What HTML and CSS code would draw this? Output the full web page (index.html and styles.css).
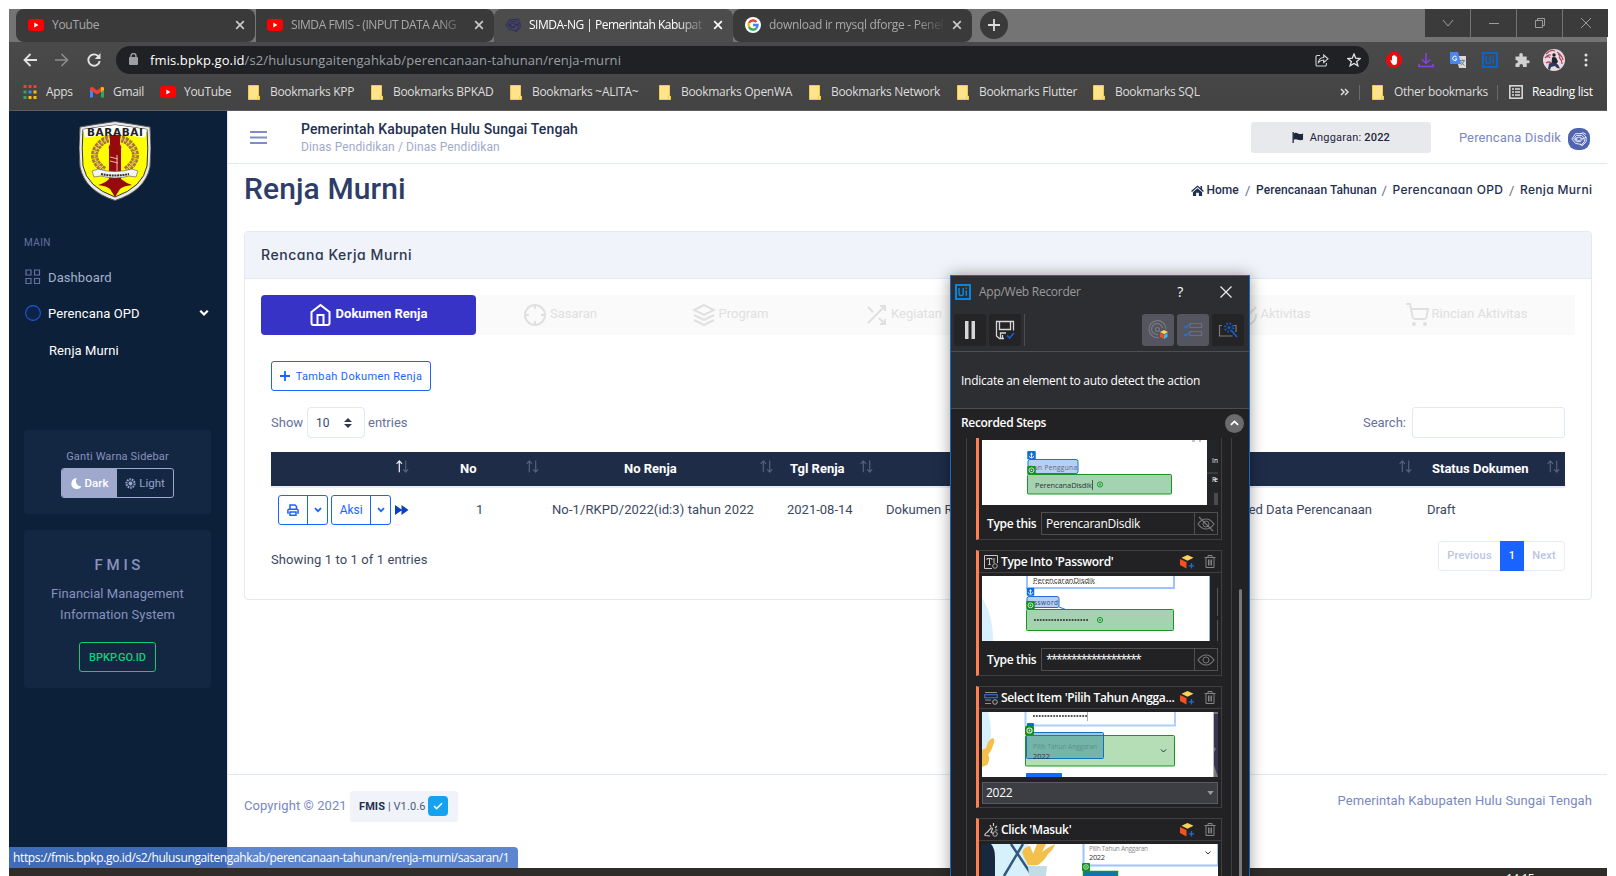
FILE: index.html
```html
<!DOCTYPE html>
<html lang="id">
<head>
<meta charset="utf-8">
<title>SIMDA-NG | Pemerintah Kabupaten Hulu Sungai Tengah</title>
<link rel="stylesheet" href="styles.css">
</head>
<body>
<svg class="defs" width="0" height="0">
  <defs>
    <symbol id="yt" viewBox="0 0 16 12"><rect width="16" height="12" rx="3" fill="#f00"/><path d="M6.3 3.4v5.2L10.4 6z" fill="#fff"/></symbol>
    <symbol id="folder" viewBox="0 0 12 15"><path d="M.5.5h10v10l1 1v3H.5z" fill="#ffe48c" stroke="#f5cb45"/><path d="M9.5 14v-3h2v3z" fill="#ffe48c" stroke="#f5cb45" stroke-width=".8"/></symbol>
    <symbol id="x" viewBox="0 0 10 10"><path d="M1.2 1.2l7.6 7.6M8.8 1.2L1.2 8.8" fill="none" stroke="currentColor" stroke-width="1.7"/></symbol>
    <symbol id="knot" viewBox="0 0 18 18"><g fill="none" stroke="currentColor" stroke-width="1.1"><path d="M1 9l4-6h8l4 4M1 9l4 5 6 1M3 9l3-4h6l3 3M3 9l3 3h5M5 9l2-2h4l2 2-2 2H7zM10 3l4-1 3 2M17 7l-4 2h-3M17 7v5l-4 4-3-1M15 9v3l-4 4M12 17l4-4"/><circle cx="6" cy="9" r="1"/></g></symbol>
    <symbol id="sort" viewBox="0 0 13 13"><path d="M3.3 12.3V1M.6 3.8L3.3.9l2.7 2.9" fill="none" stroke="var(--up,#56617a)" stroke-width="1.2"/><path d="M9.7.5v11.3M7.2 9.3l2.5 2.7 2.5-2.7" fill="none" stroke="#56617a" stroke-width="1.2"/></symbol>
    <symbol id="chev" viewBox="0 0 8 6"><path d="M1 1.2l3 3 3-3" fill="none" stroke="currentColor" stroke-width="1.8"/></symbol>
    <symbol id="ui" viewBox="0 0 16 16"><rect x="1" y="1" width="14" height="14" fill="none" stroke="currentColor" stroke-width="2"/><path d="M4 4v5.4q0 2.1 2.1 2.1t2.1-2.1V4M11.3 6.3v5.4M11.3 3.6v1.5" fill="none" stroke="currentColor" stroke-width="1.5"/></symbol>
    <symbol id="cube" viewBox="0 0 14 14"><path d="M1.5 2.7L7.5 0l6 2.7-6 3z" fill="#f9d25c"/><path d="M0 4l6.500 3v6.500L0 10z" fill="#f4511e"/><path d="M11.500 8v5.500M8.800 10.800h5.200" stroke="#1a6fd6" stroke-width="1.300"/></symbol>
    <symbol id="trash" viewBox="0 0 12 13"><path d="M.5 2.500h11M4 2.500v-2h4v2M2 2.500v10h8v-10M4.500 4.500v6M6 4.500v6M7.500 4.500v6" fill="none" stroke="#858585"/></symbol>
    <symbol id="target" viewBox="-4 -4 8 8"><circle r="2.600" fill="none" stroke="#119a22"/><circle r=".9" fill="#119a22"/></symbol>
    <symbol id="tagA" viewBox="0 0 8 8"><rect width="8" height="8" rx="1" fill="#0d6ae0"/><path d="M4 1.500v5M1.800 4.500Q2 6.500 4 6.500t2.200-2M2.700 3h2.600" fill="none" stroke="#fff" stroke-width=".8"/></symbol>
    <symbol id="tagT" viewBox="0 0 8 8"><rect width="8" height="8" rx="1" fill="#0f8f1b"/><circle cx="4" cy="4" r="2.300" fill="none" stroke="#d7f0da" stroke-width=".9"/><circle cx="4" cy="4" r=".8" fill="#d7f0da"/></symbol>
  </defs>
</svg>

<div class="screen">
  <div class="chrome">
    <div class="tabs">
      <div class="tab"><svg class="fav yt"><use href="#yt"/></svg><span class="tt">YouTube</span><svg class="cl"><use href="#x"/></svg></div>
      <div class="tab div"><svg class="fav yt"><use href="#yt"/></svg><span class="tt fade t2">SIMDA FMIS - (INPUT DATA ANG</span><svg class="cl"><use href="#x"/></svg></div>
      <div class="tab on"><svg class="fav knot"><use href="#knot"/></svg><span class="tt fade t3">SIMDA-NG | Pemerintah Kabupat</span><svg class="cl"><use href="#x"/></svg></div>
      <div class="tab"><svg class="fav goog" viewBox="0 0 16 16"><circle cx="8" cy="8" r="8" fill="#fff"/><g fill="none" stroke-width="2.400"><path d="M11.400 5A4.500 4.500 0 0 0 4 6" stroke="#ea4335"/><path d="M4 6a4.600 4.600 0 0 0 0 4" stroke="#fbbc05"/><path d="M4 10a4.500 4.500 0 0 0 7.200 1.300" stroke="#34a853"/><path d="M11.200 11.300A4.500 4.500 0 0 0 12.500 8H8" stroke="#4285f4"/></g></svg><span class="tt fade t4">download ir mysql dforge - Penel</span><svg class="cl"><use href="#x"/></svg></div>
      <div class="newtab"><svg viewBox="0 0 12 12" width="12" height="12"><path d="M6 0v12M0 6h12" stroke="#ddd" stroke-width="1.800"/></svg></div>
      <div class="win">
        <span><svg viewBox="0 0 12 12"><path d="M1 3l5 6 5-6" /></svg></span>
        <span><svg viewBox="0 0 12 12"><path d="M1 6.500h10" /></svg></span>
        <span><svg viewBox="0 0 12 12"><path d="M1.500 3.500h7v7h-7zM3.500 3.500v-2h7v7h-2" /></svg></span>
        <span><svg viewBox="0 0 12 12"><path d="M1 1l10 10M11 1L1 11" /></svg></span>
      </div>
    </div>
    <div class="nav">
      <svg class="back" viewBox="0 0 14 14"><path d="M14 7H1.500M7.500 1L1.500 7l6 6" fill="none" stroke="#e3e3e3" stroke-width="1.800"/></svg>
      <svg class="fwd" viewBox="0 0 14 14"><path d="M0 7h12.500M6.500 1l6 6-6 6" fill="none" stroke="#8a8a8a" stroke-width="1.700"/></svg>
      <svg class="rel" viewBox="0 0 14 14"><path d="M12 4.200A5.700 5.700 0 1 0 12.700 8" fill="none" stroke="#e3e3e3" stroke-width="1.900"/><path d="M13.500 0v6H7.800z" fill="#e3e3e3"/></svg>
      <div class="url">
        <svg class="lock" viewBox="0 0 9 12"><rect y="4" width="9" height="8" rx="1" fill="#9aa0a6"/><path d="M2 4.500V3a2.500 2.500 0 0 1 5 0v1.500" fill="none" stroke="#9aa0a6" stroke-width="1.400"/></svg>
        <span class="addr"><b>fmis.bpkp.go.id</b>/s2/hulusungaitengahkab/perencanaan-tahunan/renja-murni</span>
        <svg class="share" viewBox="0 0 14 14"><path d="M5 2.500H2.200A1.200 1.200 0 0 0 1 3.700v8A1.200 1.200 0 0 0 2.200 13h8a1.200 1.200 0 0 0 1.200-1.200V10M3.500 9.500q.5-4.800 5.200-5V2L13 5.800 8.700 9.500V7Q5.500 7 3.500 9.500z" fill="none" stroke="#d5d5d5" stroke-width="1.100"/></svg>
        <svg class="star" viewBox="0 0 14 14"><path d="M7 1l1.700 4.200 4.500.3-3.500 2.900 1.200 4.400L7 10.400l-3.900 2.400 1.200-4.400L.8 5.500l4.500-.3z" fill="none" stroke="#e3e3e3" stroke-width="1.300"/></svg>
      </div>
      <div class="ext">
        <svg viewBox="0 0 16 16"><path d="M5 0h6l5 5v6l-5 5H5l-5-5V5z" fill="#e40d0d"/><path d="M4.300 8.300q.9-.7 1.700.7V4.200q.7-.7 1.200 0V3.200q.7-.7 1.300 0v.6q.6-.7 1.300 0v1q.6-.6 1.300.1v4.600q0 3.500-2.900 3.500-2 0-3-2.500z" fill="#fff"/></svg>
        <svg viewBox="0 0 16 16"><path d="M8 1v10M4 7.500L8 11.300l4-3.800M1 12v2.500h14V12" fill="none" stroke="#8a3fe8" stroke-width="1.500"/></svg>
        <svg viewBox="0 0 16 16"><path d="M6 4h10v12H9z" fill="#d9d9d9"/><path d="M0 0h8l3 12H1q-1 0-1-1z" fill="#4a86f0"/><path d="M6.600 5A2.200 2.200 0 1 0 7 7H5" fill="none" stroke="#fff"/><path d="M10 8.500h5M12.500 7.500v1M14 9q-1 3-3.500 4M11 9.500q1 2 3.500 4" stroke="#66757f" fill="none" stroke-width=".9"/></svg>
        <svg viewBox="0 0 16 16" class="uic"><use href="#ui"/></svg>
        <svg viewBox="0 0 16 16"><path d="M1.500 4.500h4Q4.500 1 7 1t1.700 3.500h4v4q3-1 3 1.200t-3 1.300v4H9q.3-3-1.800-3T5.500 15h-4v-3.500Q4 11.500 4 9.700T1.500 8z" fill="#d0d0d0"/></svg>
        <svg class="ava" viewBox="0 0 22 22"><circle cx="11" cy="11" r="11" fill="#ead9de"/><path d="M3 5q5-5 9-3M2 9q3-4 6-3M14 3q5 3 6 8M16 8q3 3 3 7M3 14q3-2 5 0M4 8q2-1 3 1M15 5q2 1 2 3" stroke="#b0496a" stroke-width="1.300" fill="none"/><circle cx="11" cy="6" r="1.700" fill="#222"/><path d="M9 8.500q2-1 4 0l2 4-2 3H8.500z" fill="#20242e"/><path d="M6 14.500l4-1 5 2 2 4-3-.5-2-2-4 1-1 3-2-1z" fill="#2c3a5e"/></svg>
        <svg class="dots" viewBox="0 0 4 16"><g fill="#e3e3e3"><circle cx="2" cy="3" r="1.500"/><circle cx="2" cy="8" r="1.500"/><circle cx="2" cy="13" r="1.500"/></g></svg>
      </div>
    </div>
    <div class="marks">
      <div><svg class="i14" viewBox="0 0 13 14"><g><path d="M0 0h3v3H0zM5 0h3v3H5zM10 0h3v3h-3z" fill="#ea4335"/><path d="M0 5.500h3v3H0zM0 11h3v3H0z" fill="#34a853"/><path d="M5 5.500h3v3H5z" fill="#4285f4"/><path d="M5 11h3v3H5zM10 5.500h3v3h-3zM10 11h3v3h-3z" fill="#fbbc05"/></g></svg><span>Apps</span></div>
      <div><svg class="i14" viewBox="0 0 14 11"><path d="M0 1.500V11h3V4z" fill="#4285f4"/><path d="M14 1.500V11h-3V4z" fill="#34a853"/><path d="M0 1.500Q1-.3 3 .8l4 3.200 4-3.200q2-1.100 3 .7v2L7 8 0 3.500z" fill="#ea4335"/><path d="M11 .8q2-1.100 3 .7v2l-3 2z" fill="#fbbc05"/></svg><span>Gmail</span></div>
      <div><svg class="ytm"><use href="#yt"/></svg><span>YouTube</span></div>
      <div class="f"><svg><use href="#folder"/></svg><span>Bookmarks KPP</span></div>
      <div class="f"><svg><use href="#folder"/></svg><span>Bookmarks BPKAD</span></div>
      <div class="f"><svg><use href="#folder"/></svg><span>Bookmarks ~ALITA~</span></div>
      <div class="f"><svg><use href="#folder"/></svg><span>Bookmarks OpenWA</span></div>
      <div class="f"><svg><use href="#folder"/></svg><span>Bookmarks Network</span></div>
      <div class="f"><svg><use href="#folder"/></svg><span>Bookmarks Flutter</span></div>
      <div class="f"><svg><use href="#folder"/></svg><span>Bookmarks SQL</span></div>
      <div class="more"><svg viewBox="0 0 9 8" width="9" height="8"><path d="M1 1l3 3-3 3M5 1l3 3-3 3" fill="none" stroke="#ddd" stroke-width="1.500"/></svg></div>
      <div class="f bar"><svg><use href="#folder"/></svg><span>Other bookmarks</span></div>
      <div class="rl bar"><svg viewBox="0 0 14 14"><rect x=".8" y=".8" width="12.400" height="12.400" fill="none" stroke="#ddd" stroke-width="1.500"/><path d="M3 4h2M6 4h5M3 7h2M6 7h5M3 10h2M6 10h5" stroke="#ddd" stroke-width="1.500"/></svg><span>Reading list</span></div>
    </div>
  </div>

  <div class="app">
    <aside class="side">
      <svg class="crest" viewBox="0 0 72 80">
        <path d="M1 6Q18 3 36 .5 54 3 71 6q2 22 0 40-5 24-35 33.500Q6 70 1 46-1 28 1 6z" fill="#e8e8e8" stroke="#555"/>
        <path d="M4 8.500Q20 6 36 4q16 2 32 4.500 1.500 20 0 36.500-4 21-32 31Q8 66 4 45 2.500 28 4 8.500z" fill="#ff0" stroke="#333"/>
        <path d="M4 8.500Q20 6 36 4q16 2 32 4.500l-2 8Q36 11 6 16.500z" fill="#fff"/>
        <g fill="none" stroke="#a87434" stroke-width="7" stroke-dasharray="3 .8"><path d="M25 49Q9 37 20 24q5-6 14-7"/><path d="M47 49q16-12 5-25-5-6-14-7"/></g>
        <g fill="none" stroke="#e2c184" stroke-width="2" stroke-dasharray="2 2"><path d="M25 49Q9 37 20 24q5-6 14-7"/><path d="M47 49q16-12 5-25-5-6-14-7"/></g>
        <path d="M31 14h10v9q2 3 1 5v30q5 4 11 6-9 1-12 4l-5 8-5-8q-3-3-12-4 7-2 11-6V28q-1-2 1-5z" fill="#960a0a"/>
        <path d="M31 36l8 2M31 40l8 2M38 34v16" stroke="#e9b7b7" fill="none"/>
        <path d="M13 50l6-2q17 5 34 0l6 2-2 6-7-1q-14 4-28 0l-7 1z" fill="#f4f4f4" stroke="#555" stroke-width=".6"/>
        <path d="M22 53q14 3 28 0" stroke="#333" stroke-width="2" stroke-dasharray="2 .7" fill="none"/>
        <text x="8" y="14.500" textLength="56" class="crest-t">BARABAI</text>
      </svg>
      <div class="cap">MAIN</div>
      <div class="mi"><svg viewBox="0 0 16 16"><path d="M1 1h5v5H1zM9.500 1h5v5h-5zM1 9.500h5v5H1zM9.500 9.500h5v5h-5z" fill="none" stroke="#6470a3" stroke-width="1.200"/></svg><span>Dashboard</span></div>
      <div class="mi act"><svg viewBox="0 0 16 16"><circle cx="8" cy="8" r="7.400" fill="#0d2447" stroke="#2157d6" stroke-width="1.100"/></svg><span>Perencana OPD</span><svg class="dn"><use href="#chev"/></svg></div>
      <div class="mi sub"><span>Renja Murni</span></div>
      <div class="box theme">
        <div>Ganti Warna Sidebar</div>
        <div class="sw"><span class="dk"><svg viewBox="0 0 12 12"><path d="M6.500.2a5.900 5.900 0 1 0 5 8.800A5.500 5.500 0 0 1 6.500.2z" fill="#fff"/></svg>Dark</span><span class="lt"><svg viewBox="0 0 12 12"><circle cx="6" cy="6" r="4.400" fill="none" stroke="#97a3cb" stroke-width="2.400" stroke-dasharray="1.700 1"/><circle cx="6" cy="6" r="2.600" fill="#97a3cb" stroke="#152843" stroke-width=".8"/></svg>Light</span></div>
      </div>
      <div class="box fm">
        <h4>F M I S</h4>
        <p>Financial Management<br>Information System</p>
        <span class="gbtn">BPKP.GO.ID</span>
      </div>
    </aside>

    <main class="main">
      <header class="top">
        <svg class="burger" viewBox="0 0 17 13"><path d="M0 1h17M0 6.500h17M0 12h17" stroke="#7f8dc6" stroke-width="2"/></svg>
        <div class="org"><b>Pemerintah Kabupaten Hulu Sungai Tengah</b><span>Dinas Pendidikan / Dinas Pendidikan</span></div>
        <div class="year"><svg viewBox="0 0 12 12"><path d="M.7 0v12" stroke="#1c273c" stroke-width="1.400"/><path d="M1 1.500q2.500-1.200 5 0t5.500 0v7q-3 1-5.500 0T1 8.500z" fill="#1c273c"/></svg><span>Anggaran: <b>2022</b></span></div>
        <span class="user">Perencana Disdik</span>
        <span class="uav"><svg><use href="#knot"/></svg></span>
      </header>
      <div class="ph">
        <h1>Renja Murni</h1>
        <nav class="bc">
          <svg viewBox="0 0 14 12"><path d="M7 .5L0 6.500l1 1 6-5.200 6 5.200 1-1-2-1.800V1h-1.700v2.300z" fill="#1f3050"/><path d="M7 3.500L2 7.800V12h3.500V8.500h3V12H12V7.800z" fill="#1f3050"/></svg>
          <span class="c1">Home</span><i>/</i><span class="c2">Perencanaan Tahunan</span><i>/</i><span class="pop c3">Perencanaan OPD</span><i>/</i><span class="pop c4">Renja Murni</span>
        </nav>
      </div>

      <section class="card">
        <div class="ch pop">Rencana Kerja Murni</div>
        <div class="steps">
          <div class="st on"><svg viewBox="0 0 24 24"><path d="M3 9l9-7 9 7v11a2 2 0 0 1-2 2H5a2 2 0 0 1-2-2zM9 22V12h6v10"/></svg><span>Dokumen Renja</span></div>
          <div class="st"><svg viewBox="0 0 24 24"><path d="M22 12a10 10 0 1 1-20 0 10 10 0 0 1 20 0zM22 12h-4M6 12H2M12 6V2M12 22v-4"/></svg><span>Sasaran</span></div>
          <div class="st"><svg viewBox="0 0 24 24"><path d="M12 2L2 7l10 5 10-5zM2 17l10 5 10-5M2 12l10 5 10-5"/></svg><span>Program</span></div>
          <div class="st"><svg viewBox="0 0 24 24"><path d="M16 3h5v5M4 20L21 3M21 16v5h-5M15 15l6 6M4 4l5 5"/></svg><span>Kegiatan</span></div>
          <div class="st"><span>Sub Kegiatan</span></div>
          <div class="st"><svg viewBox="0 0 24 24"><path d="M22 11.100V12a10 10 0 1 1-5.900-9.100M22 4L12 14l-3-3"/></svg><span>Aktivitas</span></div>
          <div class="st"><svg viewBox="0 0 24 24"><circle cx="9" cy="21" r="1"/><circle cx="20" cy="21" r="1"/><path d="M1 1h4l2.700 13.400a2 2 0 0 0 2 1.600h9.700a2 2 0 0 0 2-1.600L23 6H6"/></svg><span>Rincian Aktivitas</span></div>
        </div>
        <div class="body">
          <div class="addb"><svg viewBox="0 0 10 10"><path d="M5 0v10M0 5h10" stroke="#1a63ff" stroke-width="1.800"/></svg>Tambah Dokumen Renja</div>
          <div class="tools">
            <span class="w1">Show</span>
            <div class="sel"><span>10</span><svg viewBox="0 0 8 10"><path d="M0 4l4-4 4 4zM0 6l4 4 4-4z" fill="#343a50"/></svg></div>
            <span>entries</span>
            <span class="sl">Search:</span><div class="inp"></div>
          </div>
          <div class="row th">
            <div><svg class="so first"><use href="#sort"/></svg></div>
            <div class="p2">No<svg class="so"><use href="#sort"/></svg></div>
            <div class="p3">No Renja<svg class="so"><use href="#sort"/></svg></div>
            <div class="p4">Tgl Renja<svg class="so"><use href="#sort"/></svg></div>
            <div class="p5">Uraian<svg class="so"><use href="#sort"/></svg></div>
            <div class="p6">Status Dokumen<svg class="so"><use href="#sort"/></svg></div>
          </div>
          <div class="row td">
            <div class="acts">
              <span class="grp g1"><span><svg class="prn" viewBox="0 0 12 12"><path d="M3 5V1h5l1.500 1.500V5M1.800 9H.9V6.200Q1 5.200 2 5.200h8q1 0 1.100 1V9h-.9M3 8h6v3.200H3z" fill="none" stroke="#1a63ff" stroke-width="1.500"/></svg></span><span><svg class="cd"><use href="#chev"/></svg></span></span>
              <span class="grp g2"><span>Aksi</span><span><svg class="cd"><use href="#chev"/></svg></span></span>
              <svg class="ff" viewBox="0 0 14 10"><path d="M0 0l6.500 4.500V0L13.500 5l-7 5V5.500L0 10z" fill="#0a3fc4"/></svg>
            </div>
            <div class="d2">1</div><div class="d3">No-1/RKPD/2022(id:3) tahun 2022</div><div class="d4">2021-08-14</div>
            <div class="d5"><span>Dokumen Renja</span><span>Seed Data Perencanaan</span></div><div class="d6">Draft</div>
          </div>
          <div class="bot"><span>Showing 1 to 1 of 1 entries</span><div class="pg"><span>Previous</span><span class="cur">1</span><span>Next</span></div></div>
        </div>
      </section>

      <footer class="foot">
        <span class="copy">Copyright © 2021</span>
        <span class="ver"><b>FMIS</b>&nbsp;|&nbsp;V1.0.6<i><svg viewBox="0 0 10 8"><path d="M1 4l2.600 2.600L9 1.200" fill="none" stroke="#fff" stroke-width="1.500"/></svg></i></span>
        <span class="fr">Pemerintah Kabupaten Hulu Sungai Tengah</span>
      </footer>
    </main>
  </div>

  <div class="task"><span>14:15</span></div>
  <div class="status">https://fmis.bpkp.go.id/s2/hulusungaitengahkab/perencanaan-tahunan/renja-murni/sasaran/1</div>

  <div class="rec">
    <div class="rt"><svg class="rui"><use href="#ui"/></svg><span>App/Web Recorder</span><em>?</em><svg class="rx" viewBox="0 0 12 12"><path d="M.5.5l11 11M11.500.5l-11 11" stroke="#eee" stroke-width="1.200"/></svg></div>
    <div class="rb">
      <div class="b"><svg viewBox="0 0 32 32"><path d="M11 7h3.500v18H11zM17.500 7H21v18h-3.500z" fill="#d6d6d6"/></svg></div>
      <div class="b"><svg viewBox="0 0 32 32"><path d="M15 24.500h-4.500L7.500 22V7.500h17v9M10.500 7.500v8h11v-8M11.500 24v-5h5.500M13.500 21v3" fill="none" stroke="#d6d6d6" stroke-width="1.300"/><path d="M18 21.500l2.500 2.500 4.500-5" fill="none" stroke="#1a5fd0" stroke-width="1.600"/></svg></div>
      <div class="sp"></div>
      <div class="b lt r"><svg viewBox="0 0 32 32"><g fill="none" stroke="#777881" stroke-width="1.200"><path d="M17 23.500A8.500 8.500 0 1 1 24 15"/><path d="M16 20.500A5.500 5.500 0 1 1 20.500 14"/><circle cx="15.500" cy="15.500" r="2"/></g><path d="M18 18l4-2 4 2-4 2.300z" fill="#f9d25c"/><path d="M18 19l3.700 2v4L18 23z" fill="#f4511e"/><path d="M25.500 19l-3.500 2v4l3.500-2z" fill="#3eb6f0"/></svg></div>
      <div class="b lt"><svg viewBox="0 0 32 32"><path d="M13 9.500h11.500v4H13zM13 17.500h11.500v4H13z" fill="none" stroke="#6d6e77" stroke-width="1.200"/><path d="M7 12l2 2 3.500-4M7 20l2 2 3.500-4" fill="none" stroke="#2174d8" stroke-width="1.400"/></svg></div>
      <div class="b"><svg viewBox="0 0 32 32"><path d="M10 11.500H7.500V22h13M22 11.500h2V18" fill="none" stroke="#7a7a7a" stroke-width="1.200"/><path d="M19 16l6 7" stroke="#1a5fd0" stroke-width="1.700"/><circle cx="17" cy="13.500" r="4" fill="none" stroke="#0f5ccc" stroke-width="2.200" stroke-dasharray="1.500 1.640"/><circle cx="17" cy="13.500" r="1.600" fill="#0f5ccc"/></svg></div>
    </div>
    <div class="hint">Indicate an element to auto detect the action</div>
    <div class="rh"><b>Recorded Steps</b><i><svg viewBox="0 0 10 6"><path d="M1 5l4-3.800L9 5" fill="none" stroke="#fff" stroke-width="2"/></svg></i></div>
    <div class="list">
      <div class="sc c1st">
        <svg class="th1" viewBox="0 0 236 65"><rect width="225" height="65" fill="#fff"/><rect x="225" y="0" width="11" height="65" fill="#242528"/><path d="M225 33h11" stroke="#555"/><path d="M232 53h4v12h-4z" fill="#4c4c50"/><text x="230" y="23" class="t7 w" textLength="6">In</text><text x="230" y="42" class="t7 w" textLength="6">Re</text><path d="M210 1l3 0M217 1l2 0" stroke="#888"/>
          <rect x="46" y="19.500" width="50" height="14" rx="2" fill="#b5d0f4" stroke="#1b6de0"/><text x="48" y="30" class="t7" textLength="47" fill="#667">kun Pengguna</text>
          <rect x="45.500" y="34.500" width="144" height="19.500" rx="1" fill="#a5d3b2" stroke="#16961f"/><text x="53" y="47.500" class="t8" textLength="57">PerencanaDisdik</text><path d="M110.500 40v10" stroke="#222" stroke-width=".7"/><use href="#target" x="114" y="40.500" width="8" height="8"/>
          <use href="#tagA" x="45" y="11" width="9" height="8.500"/><use href="#tagT" x="45" y="26" width="9" height="8.500"/></svg>
        <div class="ty"><b>Type this</b><span class="ti">PerencaranDisdik</span><span class="eye"><svg viewBox="0 0 18 16"><path d="M1 8q3.500-5 8-5t8 5q-3.500 5-8 5T1 8zM2 1l14 14" fill="none" stroke="#777" stroke-width="1.200"/><circle cx="9" cy="8" r="3" fill="none" stroke="#777"/></svg></span></div>
      </div>
      <div class="sc">
        <div class="hd"><svg viewBox="0 0 14 14"><path d="M8 13.500H.5V.5h13V8M3 5V3.500h5V5M5.500 3.500v6M4.300 9.500h2.400M10 3v5" fill="none" stroke="#c8c8c8"/><circle cx="11" cy="11" r="2.300" fill="none" stroke="#aaa"/></svg><b>Type Into 'Password'</b><svg class="cu"><use href="#cube"/></svg><svg class="tr"><use href="#trash"/></svg></div>
        <svg class="thm" viewBox="0 0 236 65"><rect width="228" height="65" fill="#fff"/><path d="M0 22q11 16 11 43H0z" fill="#d7f1fc"/><path d="M227.500 0v65" stroke="#8ab4e8"/><path d="M235.500 12v28M235.500 44v21" stroke="#55565c"/>
          <path d="M45 0v12h147V0" fill="none" stroke="#9cc4fb" stroke-width="2"/><text x="51" y="6.500" class="t8" textLength="62">PerencaranDisdik</text><path d="M51 7.500h62" stroke="#e04040" stroke-dasharray="1.500 1"/>
          <rect x="45" y="20.500" width="32" height="11" rx="2" fill="#b5d0f4" stroke="#1b6de0"/><text x="52" y="28.500" class="t7" textLength="24" fill="#345">ssword</text><path d="M77 31l8 3" stroke="#1b6de0"/>
          <rect x="44.500" y="33.500" width="147" height="21" rx="1" fill="#a5d3b2" stroke="#16961f"/><path d="M52 44h54" stroke="#222" stroke-width="1.500" stroke-dasharray="1.800 1.100"/><use href="#target" x="114" y="40" width="8" height="8"/>
          <use href="#tagA" x="44.500" y="11.500" width="8" height="8.500"/><use href="#tagT" x="44" y="25" width="9" height="8.500"/></svg>
        <div class="ty"><b>Type this</b><span class="ti st2">*******************</span><span class="eye"><svg viewBox="0 0 18 16"><path d="M1 8q3.500-5 8-5t8 5q-3.500 5-8 5T1 8z" fill="none" stroke="#777" stroke-width="1.200"/><circle cx="9" cy="8" r="3" fill="none" stroke="#777"/></svg></span></div>
      </div>
      <div class="sc c3rd">
        <div class="hd"><svg viewBox="0 0 14 14"><path d="M1 1.500h12M1 9h6M1 12.500h6" stroke="#8f8f8f" stroke-width="1.200"/><rect x=".7" y="3.700" width="12.600" height="3" fill="none" stroke="#2b6fd0" stroke-width="1.200"/><circle cx="11" cy="11" r="2.300" fill="none" stroke="#aaa"/></svg><b class="long">Select Item 'Pilih Tahun Angga...</b><svg class="cu"><use href="#cube"/></svg><svg class="tr"><use href="#trash"/></svg></div>
        <svg class="thm" viewBox="0 0 236 65"><rect width="236" height="65" fill="#fff"/><path d="M0 0h6q6 20 0 38L0 50z" fill="#d7f1fc"/><path d="M4 36q2-9 7-10 2 1 1 5-2 7-6 12 3 4-1 10l-5 2V38z" fill="#f3c14b"/><path d="M231.500 0h4.500v65h-4.500z" fill="#777"/><path d="M232 2h4v63l-4-12V40l2-3-2-2z" fill="#3c3253"/>
          <path d="M43.500 0v13.500H193V0" fill="none" stroke="#b0d0fb" stroke-width="2"/><path d="M51 4h54" stroke="#222" stroke-width="1.500" stroke-dasharray="1.800 1.100"/><path d="M105.500 0v9" stroke="#777" stroke-width=".6"/>
          <rect x="43.500" y="23.500" width="149" height="30.500" rx="1" fill="#b5ddb6" stroke="#16961f"/><rect x="44.500" y="20.500" width="77" height="26" rx="1" fill="#1b7f9a" fill-opacity=".42" stroke="#1272b8"/>
          <text x="51" y="36.500" class="t7" textLength="64" fill="#5c8f86">Pilih Tahun Anggaran</text><text x="51" y="46.500" class="t8" textLength="17">2022</text><path d="M179 37.500l2.500 2.500 2.500-2.500" fill="none" stroke="#234"/><path d="M44 65v-3q0-1 1-1h34q1 0 1 1v3z" fill="#0d6efd"/>
          <path d="M45 14v-2q0-1 1-1h5q1 0 1 1v2z" fill="#0d6ae0"/><use href="#tagT" x="43" y="14" width="9" height="9"/></svg>
        <div class="dd">2022<svg viewBox="0 0 8 5"><path d="M0 0h8L4 5z" fill="#999"/></svg></div>
      </div>
      <div class="sc">
        <div class="hd"><svg viewBox="0 0 14 14"><path d="M1 12.500q-.5-2 2-3L7 5q2-.5 1 2L7 9.500l3 1M1 12.500l5 .5M6 2l1 2M9.500 0v3M13 3l-2 2M13.500 7H11" fill="none" stroke="#c8c8c8" stroke-width="1.200"/><circle cx="11" cy="11" r="2.300" fill="none" stroke="#aaa"/></svg><b>Click 'Masuk'</b><svg class="cu"><use href="#cube"/></svg><svg class="tr"><use href="#trash"/></svg></div>
        <svg class="thm" viewBox="0 0 236 65"><rect width="236" height="65" fill="#fff"/><path d="M0 0h46l8 12v53H0z" fill="#d7f1fc"/><path d="M0 0h9q4 4 4 14v51H0z" fill="#16293d"/><path d="M29 0l20 30M41 0L22 32" stroke="#31587f" stroke-width="2.500"/><path d="M40 8q2-5 8-6l3 8 4-10h9l-4 8q7-5 13-8-2 6-7 10-3 6-10 11H46q-4-7-6-13z" fill="#f3c14b"/><path d="M46 22h19l-2 20H48z" fill="#c3dde6"/>
          <path d="M101.500 0v21.500H236V0" fill="#fff" stroke="#9cc4fb" stroke-width="2"/><text x="107" y="7" class="t7" textLength="59" fill="#888">Pilih Tahun Anggaran</text><text x="107" y="16" class="t8" textLength="16">2022</text><path d="M223.500 7.500L226 10l2.500-2.500" fill="none" stroke="#234"/>
          <rect x="101.500" y="27.500" width="34" height="20" fill="#1272b8" stroke="#16961f" stroke-width="1.500"/><use href="#tagT" x="100" y="19" width="8" height="8"/></svg>
      </div>
    </div>
    <div class="sb"></div>
  </div>
</div>
</body>
</html>
```

FILE: styles.css
```css
* { box-sizing: border-box; }
body { margin: 0; background: #fff; font-family: Roboto, "Liberation Sans", sans-serif; }
svg { display: block; flex: none; }
.defs { position: absolute; }
.screen { position: relative; width: 1616px; height: 876px; padding: 9px 9px 0; overflow: hidden; }
.screen span, .screen b { white-space: nowrap; }

/* browser window */
.chrome { height: 102px; background: linear-gradient(#4d4d4d, #434343); border-bottom: 1px solid #5d5d5d; font: 12px/16px "Open Sans", "Noto Sans", sans-serif; color: #ddd; letter-spacing: -0.3px; }
.tabs { height: 33px; display: flex; background: #747474; padding-left: 7px; }
.tab { width: 239px; height: 33px; display: flex; align-items: center; padding: 0 10px 2px 12px; background: #3a3a3a; border-radius: 8px; color: #a9a9a9; }
.tab.on { background: #4c4c4c; color: #fff; border-radius: 8px 8px 0 0; padding-left: 11px; }
.tab.div { border-left: 1px solid #777; border-radius: 0 8px 8px 0; padding-left: 11px; }
.fav { width: 16px; height: 16px; margin-right: 8px; }
.fav.yt { height: 12px; }
.fav.knot { color: #2c2a6b; }
.tt { flex: 1; }
.fade { -webkit-mask-image: linear-gradient(90deg, #000 84%, transparent 102%); mask-image: linear-gradient(90deg, #000 84%, transparent 102%); margin-right: 9px; }
.t2 { letter-spacing: -0.45px; }
.t3 { letter-spacing: -0.5px; }
.cl { width: 10px; height: 10px; color: #c9c9c9; }
.on .cl { color: #fff; }
.newtab { width: 28px; height: 28px; margin: 2px 0 0 8px; border-radius: 14px; background: #3a3a3a; display: flex; align-items: center; justify-content: center; }
.win { margin-left: auto; display: grid; grid-template-columns: repeat(4, 45px); gap: 1px; height: 28px; width: 182px; }
.win span { background: #3b3b3b; display: flex; align-items: center; justify-content: center; }
.win svg { width: 12px; height: 12px; fill: none; stroke: #9c9c9c; }
.nav { height: 36px; padding: 0 8px 0 14px; display: flex; align-items: center; }
.back, .fwd, .rel { width: 14px; height: 14px; }
.fwd { margin-left: 18px; }
.rel { margin-left: 18px; margin-right: 15px; }
.url { width: 1253px; height: 28px; border-radius: 14px; background: #202124; display: flex; align-items: center; padding: 0 8px 0 13px; }
.lock { width: 9px; height: 12px; margin: -2px 12px 0 0; }
.addr { flex: 1; font-size: 13px; color: #9aa0a6; letter-spacing: 0.11px; }
.addr b { font-weight: 400; color: #fff; }
.share, .star { width: 14px; height: 14px; }
.star { margin-left: 18px; }
.ext { flex: 1; display: flex; align-items: center; padding-left: 17px; gap: 16px; }
.ext svg { width: 16px; height: 16px; }
.uic { color: #0b63ce; }
.ext .ava { width: 22px; height: 22px; margin-left: -3px; }
.ext .dots { width: 4px; margin-left: 3px; }
.marks { height: 28px; padding-left: 14px; display: grid; grid-template-columns: 67px 70px 88px 123px 139px 149px 150px 148px 136px 247px 19px 138px 110px; align-items: center; }
.marks div { display: flex; align-items: center; }
.marks span { margin-top: -1px; }
.i14 { width: 14px; height: 14px; margin-right: 9px; }
.ytm { width: 16px; height: 12px; margin-right: 8px; }
.f svg { width: 12px; height: 15px; margin-right: 10px; }
.marks .bar { border-left: 1px solid #6b6b6b; padding-left: 12px; }
.marks .rl { color: #fff; padding-left: 11px; }
.rl svg { width: 14px; height: 14px; margin-right: 9px; }

/* application */
.app { height: 757px; display: flex; }
.side { width: 219px; background: #0c2139; border-right: 1px solid #dfe6f3; padding: 10px 16px 0 15px; font-size: 13px; color: #a5b0cc; }
.crest { width: 72px; height: 80px; margin-left: 55px; }
.crest-t { font: 700 10.500px "DejaVu Sans", sans-serif; fill: #222; }
.cap { margin-top: 34px; height: 16px; font-size: 10px; line-height: 16px; letter-spacing: 0.4px; color: #6470a3; }
.mi { display: flex; align-items: center; height: 36px; letter-spacing: 0.1px; }
.cap + .mi { margin-top: 8px; }
.mi svg { width: 16px; height: 16px; margin-right: 7px; margin-left: 1px; }
.mi.act, .mi.sub { color: #fff; }
.mi svg.dn { width: 10px; height: 8px; margin: 0 2px 0 auto; color: #fff; }
.mi.sub { padding-left: 25px; height: 38px; }
.box { background: #142742; border-radius: 4px; text-align: center; color: #8792bd; }
.theme { margin-top: 61px; height: 84px; padding-top: 19px; font-size: 11px; line-height: 16px; letter-spacing: 0.15px; }
.sw { width: 113px; height: 30px; margin: 3px auto 0; display: flex; border: 1px solid #9fa8cd; border-radius: 3px; line-height: 28px; overflow: hidden; letter-spacing: 0; }
.sw span { display: flex; align-items: center; justify-content: center; gap: 3px; color: #97a3cb; font-size: 11.500px; }
.sw svg { width: 11px; height: 11px; }
.sw .dk { width: 55px; background: #9fa8cd; color: #fff; font-weight: 500; }
.sw .lt { flex: 1; }
.fm { margin-top: 16px; height: 158px; padding-top: 24px; }
.fm h4 { margin: 0; font: 500 15px/22px Roboto, sans-serif; }
.fm p { margin: 7px 0 17px; line-height: 21px; letter-spacing: 0.05px; }
.gbtn { display: inline-block; height: 30px; width: 77px; border: 1px solid #0acf74; border-radius: 3px; color: #0fd07a; font-size: 11px; font-weight: 500; line-height: 29px; }

.main { flex: 1; display: flex; flex-direction: column; color: #3b4863; font-size: 13px; }
.top { height: 53px; border-bottom: 1px solid #dfe8f5; display: flex; align-items: center; padding: 0 17px 0 22px; flex: none; }
.burger { width: 17px; height: 13px; margin-right: 34px; }
.org { display: flex; flex-direction: column; line-height: 18px; padding-top: 1px; }
.org b { font-size: 14px; font-weight: 500; color: #1f3050; letter-spacing: 0.13px; }
.org span { font-size: 12px; color: #a2aaca; letter-spacing: 0.1px; }
.year { margin-left: auto; width: 180px; height: 31px; background: #e8e9ed; border-radius: 3px; display: flex; align-items: center; justify-content: center; gap: 6px; font-size: 11px; letter-spacing: 0.2px; color: #1c273c; }
.year b { font-weight: 500; }
.year svg { width: 12px; height: 11px; }
.user { margin: 0 7px 0 28px; font-size: 13px; color: #7987c4; letter-spacing: 0.12px; }
.uav { width: 22px; height: 22px; margin-top: 3px; border-radius: 9px; background: #5065b1; display: flex; align-items: center; justify-content: center; color: #e8ebf8; }
.uav svg { width: 16px; height: 16px; }
.ph { flex: none; height: 67px; padding: 0 15px 0 16px; display: flex; justify-content: space-between; }
.ph h1 { margin: 5px 0 0; font: 500 30px/40px Roboto, sans-serif; color: #2e3d68; letter-spacing: 0.1px; }
.bc { display: flex; align-items: center; height: 52px; font-size: 12px; font-weight: 500; color: #1f3050; }
.bc svg { width: 13px; height: 11px; margin-right: 3px; }
.bc i { font-style: normal; font-weight: 400; width: 16.500px; text-align: center; color: #5b6796; font-size: 13px; }
.bc .c1 { width: 33px; } .bc .c2 { width: 120px; letter-spacing: 0.08px; } .bc .c3 { width: 111px; } .bc .c4 { width: 72px; }
.pop { font-family: Inter, Roboto, sans-serif; font-feature-settings: "cv11"; }
.bc .pop { font-size: 12px; letter-spacing: 0.33px; margin-top: -1px; }
.card { flex: none; margin: 0 15px 0 16px; height: 369px; border: 1px solid #e1e9f5; border-radius: 4px; }
.ch { height: 47px; border-bottom: 1px solid #e1e9f5; background: #f0f3f9; padding-left: 16px; line-height: 46px; font-size: 14px; font-weight: 500; letter-spacing: 0.55px; color: #2d3750; }
.steps { margin: 16px 16px 0; height: 40px; display: grid; grid-template-columns: 215px 169px 171px 175px 196px 171px 1fr; background: #fafafa; }
.st { display: flex; align-items: center; justify-content: center; color: #e0e0e0; gap: 3px; line-height: 16px; padding-right: 1px; }
.st span { margin-top: -3px; }
.st svg { width: 24px; height: 24px; fill: none; stroke: #e0e0e0; stroke-width: 2; }
.st.on { background: #3733c7; border-radius: 4px; color: #fff; font-weight: 700; padding-right: 2px; }
.st.on svg { stroke: #fff; width: 25px; height: 24px; }
.body { padding: 26px 26px 0; }
.addb { width: 160px; height: 30px; border: 1px solid #1a63ff; border-radius: 3px; color: #1a63ff; font-size: 11px; letter-spacing: 0.37px; display: flex; align-items: center; justify-content: center; gap: 6px; }
.addb svg { width: 10px; height: 10px; }
.tools { margin-top: 16px; height: 31px; display: flex; align-items: center; color: #66719b; }
.w1 { width: 36px; }
.sel { width: 58px; height: 31px; border: 1px solid #e1e9f5; border-radius: 4px; margin-right: 3px; padding: 0 12px 0 8px; display: flex; align-items: center; justify-content: space-between; font-size: 12px; color: #3b4863; }
.sel svg { width: 8px; height: 10px; }
.sl { margin-left: auto; margin-right: 6px; }
.inp { width: 153px; height: 31px; border: 1px solid #e1e9f5; border-radius: 3px; }
.row { display: grid; grid-template-columns: 143px 130px 234px 100px 539px 1fr; align-items: center; }
.th { margin-top: 14px; height: 36px; background: #1e2c48; border-bottom: 2px solid #e8edf7; color: #fff; font-weight: 700; }
.th div { position: relative; line-height: 34px; height: 34px; white-space: nowrap; }
.so { position: absolute; right: 5px; top: 8px; width: 13px; height: 13px; }
.first { --up: #f0f2f6; }
.p2 { padding-left: 46px; } .p3 { padding-left: 80px; } .p4 { padding-left: 12px; } .p5 { padding-left: 240px; } .p6 { padding-left: 15px; }
.td { height: 43px; }
.acts { display: flex; align-items: center; padding-left: 7px; gap: 3px; }
.grp { display: flex; height: 30px; border: 1px solid #1a63ff; border-radius: 3px; color: #1a63ff; font-size: 12px; }
.grp > span { display: flex; align-items: center; justify-content: center; }
.grp > span + span { border-left: 1px solid #1a63ff; }
.g1 { width: 50px; } .g1 > span { width: 29px; } .g1 > span + span { width: 20px; }
.g2 { width: 60px; } .g2 > span { width: 39px; } .g2 > span + span { width: 20px; }
.prn { width: 12px; height: 12px; }
.cd { width: 8px; height: 6px; }
.ff { width: 14px; height: 10px; margin-left: 1px; }
.d2 { padding-left: 62px; } .d3 { padding-left: 8px; letter-spacing: 0.1px; } .d4 { padding-left: 9px; } .d5 { padding: 0 45px 0 8px; display: flex; justify-content: space-between; } .d6 { padding-left: 10px; }
.bot { margin-top: 10px; height: 30px; display: flex; align-items: center; justify-content: space-between; }
.bot > span { margin-top: 6px; letter-spacing: 0.1px; }
.pg { display: flex; width: 127px; height: 30px; border: 1px solid #e8eef8; border-radius: 3px; font-size: 11px; font-weight: 500; color: #bcc4e4; line-height: 28px; text-align: center; letter-spacing: 0.2px; }
.pg span { width: 61px; }
.pg .cur { width: 24px; margin: -1px 0; line-height: 30px; background: #1a63ff; color: #fff; }
.pg span:last-child { width: 40px; }
.foot { margin-top: auto; height: 94px; border-top: 1px solid #dfe8f5; padding: 16px 15px 0 16px; display: flex; align-items: flex-start; color: #7987c4; }
.copy { width: 106px; line-height: 29px; letter-spacing: 0.08px; }
.ver { width: 108px; height: 31px; background: #f0f3f9; border-radius: 3px; display: flex; align-items: center; padding-left: 9px; font-size: 11px; color: #4b5a78; letter-spacing: 0.1px; }
.ver b { font-weight: 700; color: #1f3050; }
.ver i { width: 20px; height: 20px; margin: -2px 0 0 3px; border-radius: 4px; background: #15a2ee; display: flex; align-items: center; justify-content: center; }
.ver i svg { width: 10px; height: 8px; }
.fr { margin-left: auto; line-height: 20px; letter-spacing: 0.1px; }

.task { height: 8px; background: #2f2d2a; overflow: hidden; padding-left: 1497px; }
.task span { display: block; margin-top: 3px; font: 12px/16px "Open Sans", sans-serif; color: #fff; letter-spacing: -0.5px; }
.status { position: absolute; left: 9px; top: 847px; width: 509px; height: 21px; padding-left: 4px; background: rgba(69, 118, 202, .88); border-top-right-radius: 4px; font: 12px/21px "Open Sans", sans-serif; letter-spacing: -0.36px; color: #fff; white-space: nowrap; }

/* recorder window */
.rec { position: absolute; left: 950px; top: 275px; width: 300px; height: 620px; border: 1px solid #1668c4; background: #2d2e32; box-shadow: 0 0 14px rgba(0, 0, 0, .38); font: 12px/16px "Open Sans", "Noto Sans", sans-serif; color: #fff; letter-spacing: -0.27px; }
.rec b { font-weight: 600; letter-spacing: -0.32px; }
.rt { height: 34px; display: flex; align-items: center; padding: 0 17px 3px 4px; }
.rui { width: 16px; height: 16px; color: #0a84dc; margin-right: 8px; }
.rt span { color: #9b9b9b; }
.rt em { font-style: normal; font-size: 14px; margin-left: auto; margin-right: 37px; }
.rx { width: 12px; height: 12px; }
.rb { height: 42px; border-bottom: 1px solid #4d4e52; display: flex; gap: 3px; padding: 4px 5px 0 3px; }
.b { width: 32px; height: 32px; border-radius: 3px; background: #242426; }
.b.lt { background: #54555e; }
.b.r { margin-left: auto; }
.sp { width: 1px; background: #4d4e52; height: 32px; }
.hint { height: 57px; border-bottom: 1px solid #4d4e52; padding-left: 10px; line-height: 57px; white-space: nowrap; }
.rh { height: 29px; background: #222224; padding: 0 5px 1px 10px; display: flex; align-items: center; justify-content: space-between; }
.rh i { width: 19px; height: 19px; border-radius: 10px; background: #6b6b6d; display: flex; align-items: center; justify-content: center; }
.rh i svg { width: 9px; height: 6px; }
.list { height: 460px; background: #222224; padding: 0 27px 0 25px; box-shadow: inset 15px 0 #222224, inset 16px 0 #3f3f42, inset -17px 0 #222224, inset -18px 0 #3f3f42; }
.sc { width: 246px; height: 126px; margin-bottom: 10px; border: 1px solid #3f3f42; border-left: 3px solid #ff7f50; padding: 0 3px; }
.c1st { height: 102px; border-top: 0; padding-top: 2px; }
.c3rd { height: 122px; }
.th1, .thm { width: 236px; height: 65px; }
.hd { height: 22px; margin: 0 -3px 3px; border-bottom: 1px solid #3f3f42; display: flex; align-items: center; padding: 0 5px; }
.hd > svg:first-child { width: 14px; height: 14px; margin-right: 3px; }
.hd b { flex: 1; }
.cu { width: 14px; height: 14px; margin-right: 10px; }
.tr { width: 12px; height: 13px; }
.ty { display: flex; height: 23px; margin-top: 7px; align-items: center; }
.ty b { width: 59px; padding-left: 5px; }
.ti { flex: 1; height: 23px; border: 1px solid #4f4f52; padding-left: 4px; line-height: 21px; }
.st2 { letter-spacing: -1.65px; }
.eye { width: 23px; height: 23px; border: 1px solid #4f4f52; border-left: 0; display: flex; align-items: center; justify-content: center; }
.eye svg { width: 18px; height: 16px; }
.dd { margin-top: 5px; height: 22px; border: 1px solid #5a5b60; background: #3d3e44; padding: 0 3px; display: flex; align-items: center; justify-content: space-between; }
.dd svg { width: 7px; height: 4px; }
.sb { position: absolute; left: 288px; top: 313px; width: 3px; height: 300px; background: #77787a; border-radius: 2px; }
.t7 { font: 6.500px "Open Sans", sans-serif; letter-spacing: 0; }
.t8 { font: 7.500px "Open Sans", sans-serif; letter-spacing: 0; fill: #333; }
.w { fill: #fff; }
```
